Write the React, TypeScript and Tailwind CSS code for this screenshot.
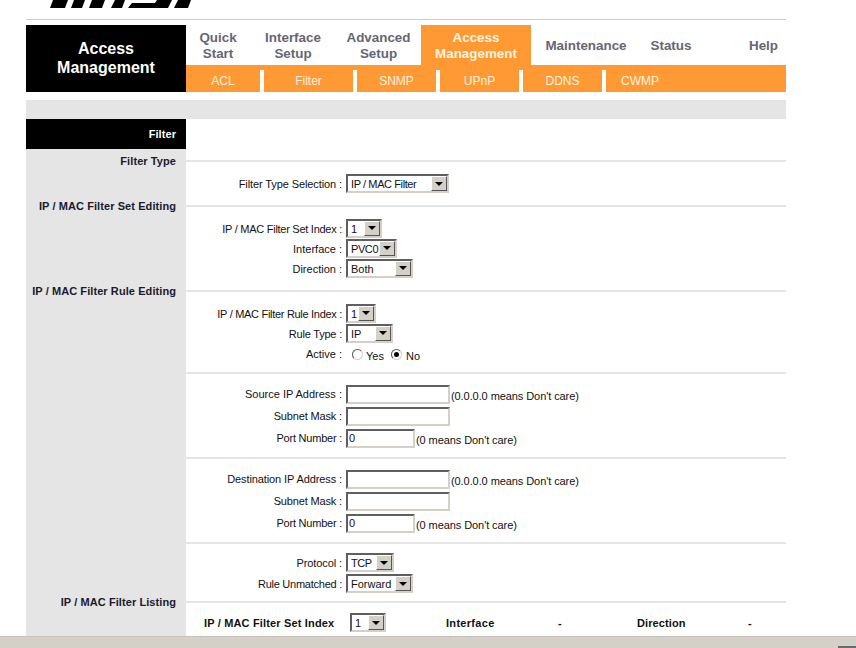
import React from "react";

const ORANGE = "bg-[#ff9933]";

function Logo() {
  return (
    <svg width="160" height="9" viewBox="0 0 160 9" className="absolute left-[40px] top-0" aria-hidden="true">
      <g fill="#000">
        <polygon points="13,0 28,0 25,8 10,8" />
        <polygon points="34,0 45,0 42,8 31,8" />
        <polygon points="52,0 65,0 62,8 49,8" />
        <polygon points="75,0 85,0 82,8 71,8" />
        <polygon points="92,3 115,3 117,0 132,0 128,8 88,8" />
        <polygon points="138,0 151,0 148,8 134,8" />
      </g>
    </svg>
  );
}

function Row({ label, h, children }: { label?: string; h: string; children?: React.ReactNode }) {
  return (
    <div className={`flex ${h}`}>
      <div className="w-[160px] shrink-0 bg-[#e5e5e5] flex items-center justify-end pr-[10px] text-[11px] font-bold tracking-[0.08px] text-[#1a1a2e] whitespace-nowrap">
        {label}
      </div>
      <div className="flex-1 min-w-0">{children}</div>
    </div>
  );
}

function Divider({ label, h }: { label?: string; h: string }) {
  return (
    <Row label={label} h={h}>
      <div className="h-full flex items-center">
        <div className="h-[2px] w-full bg-[#e5e5e5]" />
      </div>
    </Row>
  );
}

function Select({ value, w, tr = "" }: { value: string; w: string; tr?: string }) {
  return (
    <div className={`${w} h-[19px] flex items-stretch bg-white border-2 border-t-[#5f5f5f] border-l-[#5f5f5f] border-r-[#d4d0c8] border-b-[#d4d0c8] shrink-0 font-normal`}>
      <span className={`flex-1 pl-[3px] pt-px text-[11px] leading-[14px] text-[#111] whitespace-nowrap overflow-hidden ${tr}`}>{value}</span>
      <span className="w-[16px] shrink-0 bg-[#d4d0c8] border border-t-white border-l-white border-r-[#555] border-b-[#555] flex items-center justify-center">
        <span className="w-0 h-0 border-x-[4px] border-x-transparent border-t-[4px] border-t-black" />
      </span>
    </div>
  );
}

function TextInput({ value, w }: { value?: string; w: string }) {
  return (
    <div className={`${w} h-[19px] shrink-0 bg-white border-2 border-t-[#5f5f5f] border-l-[#5f5f5f] border-r-[#d4d0c8] border-b-[#d4d0c8] pl-px text-[11px] leading-[15px] text-[#111]`}>
      {value}
    </div>
  );
}

function Field({
  label,
  h,
  tr = "",
  shift = "mt-[2px]",
  pad = "",
  children,
}: {
  label: string;
  h: string;
  tr?: string;
  shift?: string;
  pad?: string;
  children: React.ReactNode;
}) {
  return (
    <Row h={h}>
      <div className={`h-full flex items-center text-[11px] text-[#111] whitespace-nowrap ${pad}`}>
        <div className={`w-[156px] text-right shrink-0 ${tr} ${shift}`}>{label} :</div>
        <div className="ml-[4px] flex items-center">{children}</div>
      </div>
    </Row>
  );
}

function Radio({ on }: { on?: boolean }) {
  return (
    <span className="w-[11px] h-[11px] rounded-full bg-white border border-t-[#555] border-l-[#555] border-r-[#d4d0c8] border-b-[#d4d0c8] flex items-center justify-center shrink-0">
      {on && <span className="w-[5px] h-[5px] rounded-full bg-black" />}
    </span>
  );
}

function Hint({ children }: { children: React.ReactNode }) {
  return <span className="ml-px mt-[5px] text-[11px] tracking-[-0.08px] text-[#111]">{children}</span>;
}

function AddressGroup({ first, tr = "" }: { first: string; tr?: string }) {
  return (
    <>
      <Field label={first} h="h-[22px]" tr={tr} shift="" pad="pb-[2px]">
        <TextInput w="w-[104px]" />
        <Hint>(0.0.0.0 means Don't care)</Hint>
      </Field>
      <Field label="Subnet Mask" h="h-[22px]" tr="tracking-[-0.15px]" shift="" pad="pb-[2px]">
        <TextInput w="w-[104px]" />
      </Field>
      <Field label="Port Number" h="h-[22px]" tr="tracking-[-0.23px]" shift="" pad="pb-[2px]">
        <TextInput w="w-[69px]" value="0" />
        <Hint>(0 means Don't care)</Hint>
      </Field>
    </>
  );
}

const mainTabs = [
  { w: "w-[64px]", lines: ["Quick", "Start"] },
  { w: "w-[86px]", lines: ["Interface", "Setup"] },
  { w: "w-[85px]", lines: ["Advanced", "Setup"] },
  { w: "w-[110px]", lines: ["Access", "Management"], active: true },
  { w: "w-[110px]", lines: ["Maintenance"] },
  { w: "w-[60px]", lines: ["Status"] },
  { w: "flex-1", lines: ["Help"], right: true },
];

const subTabs = [
  { w: "w-[74px]", label: "ACL" },
  { w: "w-[89px]", label: "Filter" },
  { w: "w-[79px]", label: "SNMP" },
  { w: "w-[79px]", label: "UPnP" },
  { w: "w-[79px]", label: "DDNS" },
  { w: "w-[68px]", label: "CWMP" },
];

export default function App() {
  return (
    <div className="relative w-[856px] h-[648px] overflow-hidden bg-white font-['Liberation_Sans',Arial,sans-serif]">
      <Logo />
      <div className="ml-[26px] w-[760px]">
        <div className="pt-[19px]">
          <div className="h-px bg-[#cccccc]" />
        </div>

        <div className="mt-[5px] flex h-[67px]">
          <div className="w-[160px] shrink-0 bg-black flex items-center justify-center text-center text-white font-bold text-[16px] leading-[19px] pb-[1px]">
            Access
            <br />
            Management
          </div>
          <div className="flex-1 flex flex-col">
            <div className="h-[40px] flex">
              {mainTabs.map((t) => (
                <div
                  key={t.lines[0]}
                  className={`${t.w} h-full pt-[2px] flex flex-col items-center justify-center text-center font-bold text-[13.4px] leading-[16px] ${
                    t.active ? `${ORANGE} text-[#fff3df]` : "text-[#666673]"
                  } ${t.right ? "items-end pr-[8px]" : ""}`}
                >
                  {t.lines.map((l) => (
                    <span key={l}>{l}</span>
                  ))}
                </div>
              ))}
            </div>
            <div className={`h-[27px] ${ORANGE} flex`}>
              {subTabs.map((t, i) => (
                <React.Fragment key={t.label}>
                  {i > 0 && <div className="w-[4px] h-[22px] mt-[5px] bg-white shrink-0" />}
                  <div className={`${t.w} shrink-0 pt-[8px] text-center text-[12px] leading-[16px] text-[#fff3e4]`}>{t.label}</div>
                </React.Fragment>
              ))}
            </div>
          </div>
        </div>

        <div className="mt-[8px] h-[19px] bg-[#e5e5e5]" />

        <div className="flex h-[30px]">
          <div className="w-[160px] bg-black flex items-center justify-end pr-[10px] text-[11px] font-bold tracking-[0.08px] text-white">Filter</div>
        </div>

        <Divider label="Filter Type" h="h-[24px]" />
        <Field label="Filter Type Selection" h="h-[21px]" tr="tracking-[-0.1px]">
          <Select value="IP / MAC Filter" w="w-[103px]" tr="tracking-[-0.4px]" />
        </Field>

        <Divider label="IP / MAC Filter Set Editing" h="h-[24px]" />
        <Field label="IP / MAC Filter Set Index" h="h-[20px]" tr="tracking-[-0.27px]">
          <Select value="1" w="w-[36px]" />
        </Field>
        <Field label="Interface" h="h-[20px]">
          <Select value="PVC0" w="w-[51px]" tr="tracking-[-0.4px]" />
        </Field>
        <Field label="Direction" h="h-[20px]">
          <Select value="Both" w="w-[67px]" />
        </Field>
        <Row h="h-px" />

        <Divider label="IP / MAC Filter Rule Editing" h="h-[24px]" />
        <Field label="IP / MAC Filter Rule Index" h="h-[20px]" tr="tracking-[-0.3px]">
          <Select value="1" w="w-[30px]" />
        </Field>
        <Field label="Rule Type" h="h-[20px]" tr="tracking-[-0.2px]">
          <Select value="IP" w="w-[47px]" />
        </Field>
        <Field label="Active" h="h-[19px]" shift="mt-[4px]">
          <div className="ml-[6px] mt-[3px] flex items-center">
            <Radio />
            <span className="ml-[3px] mt-[5px]">Yes</span>
            <span className="ml-[7px]"><Radio on /></span>
            <span className="ml-[4px] mt-[5px]">No</span>
          </div>
        </Field>

        <Divider h="h-[22px]" />
        <AddressGroup first="Source IP Address" />
        <Divider h="h-[16px]" />
        <Row h="h-[3px]" />
        <AddressGroup first="Destination IP Address" tr="tracking-[-0.1px]" />
        <Divider h="h-[16px]" />
        <Row h="h-px" />
        <Field label="Protocol" h="h-[21px]" tr="tracking-[-0.1px]">
          <Select value="TCP" w="w-[48px]" tr="tracking-[-0.4px]" />
        </Field>
        <Field label="Rule Unmatched" h="h-[21px]" tr="tracking-[-0.25px]">
          <Select value="Forward" w="w-[67px]" />
        </Field>

        <Divider label="IP / MAC Filter Listing" h="h-[16px]" />
        <Row h="h-[26px]">
          <div className="h-full pt-[3px] pb-[4px] flex items-center text-[11px] font-bold text-[#111] whitespace-nowrap">
            <div className="w-[164px] pl-[18px] shrink-0 mt-[2px] tracking-[0.16px]">IP / MAC Filter Set Index</div>
            <Select value="1" w="w-[36px]" />
            <div className="w-[60px] shrink-0" />
            <div className="w-[112px] shrink-0 mt-[2px] tracking-[0.3px]">Interface</div>
            <div className="w-[79px] shrink-0 mt-[2px]">-</div>
            <div className="w-[111px] shrink-0 mt-[2px] tracking-[0.1px]">Direction</div>
            <div className="mt-[2px]">-</div>
          </div>
        </Row>
      </div>

      <div className="absolute inset-x-0 bottom-0 h-[12px] bg-[#d4d0c8] border-t border-[#c8c4bc]">
        <div className="absolute right-0 bottom-0 w-[18px] h-[2px] bg-[#6b6b6b]" />
      </div>
    </div>
  );
}
